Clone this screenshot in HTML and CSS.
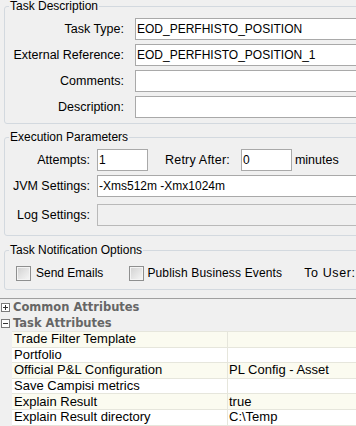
FILE: index.html
```html
<!DOCTYPE html>
<html>
<head>
<meta charset="utf-8">
<link rel="stylesheet" href="styles.css">
</head>
<body>
<div class="page">
  <fieldset class="group group-desc">
    <legend>Task Description</legend>
    <div class="form form-desc">
      <label class="lbl">Task Type:</label>
      <input class="field" type="text" value="EOD_PERFHISTO_POSITION" readonly>
      <label class="lbl">External Reference:</label>
      <input class="field" type="text" value="EOD_PERFHISTO_POSITION_1" readonly>
      <label class="lbl">Comments:</label>
      <input class="field" type="text" value="" readonly>
      <label class="lbl">Description:</label>
      <input class="field" type="text" value="" readonly>
    </div>
  </fieldset>

  <fieldset class="group group-exec">
    <legend>Execution Parameters</legend>
    <div class="form form-exec">
      <label class="lbl">Attempts:</label>
      <div class="inline">
        <input class="field field-small" type="text" value="1" readonly>
        <span class="lbl retry">Retry After:</span>
        <input class="field field-small" type="text" value="0" readonly>
        <span class="lbl unit">minutes</span>
      </div>
      <label class="lbl">JVM Settings:</label>
      <input class="field" type="text" value="-Xms512m -Xmx1024m" readonly>
      <label class="lbl row-log">Log Settings:</label>
      <input class="field field-disabled row-log" type="text" value="" disabled>
    </div>
  </fieldset>

  <fieldset class="group group-notify">
    <legend>Task Notification Options</legend>
    <div class="checks">
      <span class="check"><span class="box"></span>Send Emails</span>
      <span class="check check-2"><span class="box"></span>Publish Business Events</span>
      <span class="lbl touser">To User:</span>
    </div>
  </fieldset>

  <div class="attrs">
    <div class="section">
      <svg class="toggle" width="9" height="9" viewBox="0 0 9 9"><rect x="0.5" y="0.5" width="8" height="8" fill="#fff" stroke="#7a7a7a"/><path d="M2 4.5h5M4.5 2v5" stroke="#333" stroke-width="1"/></svg>
      <span>Common Attributes</span>
    </div>
    <div class="section">
      <svg class="toggle" width="9" height="9" viewBox="0 0 9 9"><rect x="0.5" y="0.5" width="8" height="8" fill="#fff" stroke="#7a7a7a"/><path d="M2 4.5h5" stroke="#333" stroke-width="1"/></svg>
      <span>Task Attributes</span>
    </div>
    <table class="props">
      <tr><td>Trade Filter Template</td><td></td></tr>
      <tr><td>Portfolio</td><td></td></tr>
      <tr><td>Official P&amp;L Configuration</td><td>PL Config - Asset</td></tr>
      <tr><td>Save Campisi metrics</td><td></td></tr>
      <tr><td>Explain Result</td><td>true</td></tr>
      <tr><td>Explain Result directory</td><td>C:\Temp</td></tr>
    </table>
  </div>
</div>
</body>
</html>
```

FILE: styles.css
```css
html, body {
  margin: 0;
  padding: 0;
  background: #f0f0f0;
  overflow: hidden;
}

.page {
  width: 420px;
  font-family: "Liberation Sans", Arial, sans-serif;
  font-size: 12px;
  color: #000;
}

.group {
  margin: 0 0 0 4px;
  padding: 6px 0 5px 0;
  border: 1px solid #d3d9df;
  border-radius: 3px 0 0 3px;
  min-width: 0;
}

.group legend {
  margin-left: 4px;
  padding: 0 1px;
  font-size: 12px;
  line-height: 12px;
  height: 12px;
}

.group-exec {
  margin-top: 7px;
  padding-bottom: 9px;
}

.group-notify {
  margin-top: 8px;
  padding-top: 7px;
  padding-bottom: 6px;
}

.form {
  display: grid;
  row-gap: 4px;
  align-items: center;
}

.form-desc {
  grid-template-columns: 119px 1fr;
  column-gap: 11px;
}

.form-exec {
  grid-template-columns: 85px 1fr;
  column-gap: 7px;
}

.lbl {
  font-size: 12.5px;
  text-align: right;
  white-space: nowrap;
}

.form .row-log {
  margin-top: 3px;
}

.field {
  box-sizing: border-box;
  height: 22px;
  width: 100%;
  margin: 0;
  padding: 0 1px;
  border: 1px solid #a9a9a9;
  background: #fff;
  font-family: "Liberation Sans", Arial, sans-serif;
  font-size: 12px;
  color: #000;
  outline: none;
}

.field-disabled {
  background: #f0f0f0;
  border-color: #b9b9b9;
}

.inline {
  display: flex;
  align-items: center;
}

.field-small {
  width: 51px;
}

.retry {
  margin-left: 17px;
  margin-right: 11px;
  letter-spacing: 0.2px;
}

.unit {
  margin-left: 3px;
}

.checks {
  display: flex;
  align-items: center;
  height: 20px;
  padding-left: 11px;
}

.check {
  display: flex;
  align-items: center;
  gap: 5px;
  font-size: 12px;
  white-space: nowrap;
}

.check-2 {
  margin-left: 26px;
  gap: 3px;
  letter-spacing: 0.15px;
}

.box {
  box-sizing: border-box;
  width: 15px;
  height: 15px;
  border: 1px solid #8e8f8f;
  background: linear-gradient(135deg, #d0d0d0 0%, #e6e6e6 55%, #f7f7f7 100%);
  box-shadow: inset 0 0 0 1px #f4f4f4;
}

.touser {
  margin-left: 22px;
  letter-spacing: 0.6px;
}

.attrs {
  margin-top: 8px;
  border-top: 1px solid #a0a0a0;
}

.section {
  display: flex;
  align-items: center;
  height: 16px;
  padding-left: 1px;
  gap: 3px;
  font-family: "DejaVu Sans", Verdana, sans-serif;
  font-weight: bold;
  font-size: 11.5px;
  color: #666;
}

.toggle {
  flex: none;
}

.props {
  margin-left: 12px;
  width: 420px;
  border-collapse: collapse;
  table-layout: fixed;
  font-size: 13px;
}

.props tr {
  height: 15.6px;
}

.props td {
  padding: 0 2px;
  line-height: 14px;
  border: 1px solid #e6e6dc;
  white-space: nowrap;
  overflow: hidden;
}

.props td:first-child {
  width: 211px;
  border-left: none;
}

.props td + td {
  padding-left: 1px;
}

.props tr:nth-child(odd) td {
  background: #fbfbf0;
}

.props tr:nth-child(even) td {
  background: #fff;
}
```
